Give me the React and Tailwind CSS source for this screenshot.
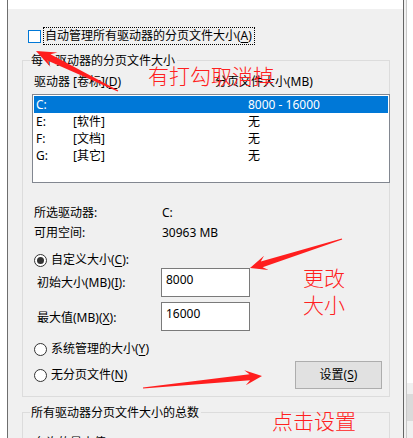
import React from "react";

const FONT = "font-['Noto_Sans','Noto_Sans_CJK_SC',sans-serif]";
const CJK = "font-['Noto_Sans_CJK_SC','Noto_Sans',sans-serif]";

function Radio({ checked }) {
  return (
    <span className="w-[13px] h-[13px] rounded-full border border-[#333333] bg-white flex items-center justify-center shrink-0">
      {checked && <span className="w-[7px] h-[7px] rounded-full bg-[#333333]" />}
    </span>
  );
}

function U({ children }) {
  return <span className="underline underline-offset-2 decoration-1">{children}</span>;
}

function arrowPoints(tx, ty, px, py, hl = 17, hw = 8, sw = 3, tw = 0.6) {
  const dx = px - tx, dy = py - ty;
  const L = Math.hypot(dx, dy);
  const ux = dx / L, uy = dy / L;
  const nx = -uy, ny = ux;
  const p = (a, b) => `${a.toFixed(1)},${b.toFixed(1)}`;
  const bx = px - ux * hl, by = py - uy * hl;
  const kx = px - ux * hl * 0.72, ky = py - uy * hl * 0.72;
  return [
    p(px, py),
    p(bx + nx * hw, by + ny * hw),
    p(kx + nx * sw, ky + ny * sw),
    p(tx + nx * tw, ty + ny * tw),
    p(tx - nx * tw, ty - ny * tw),
    p(kx - nx * sw, ky - ny * sw),
    p(bx - nx * hw, by - ny * hw),
  ].join(" ");
}

function GroupLabel({ children }) {
  return (
    <div className="h-[8px] -mt-[8px] leading-[16px]">
      <span className="inline-block ml-[7px] pl-px pr-[2px] bg-[#f0f0f0] leading-[16px]">{children}</span>
    </div>
  );
}

const rows = [
  { d: "C:", l: "", s: "8000 - 16000", sel: true },
  { d: "E:", l: "[软件]", s: "无" },
  { d: "F:", l: "[文档]", s: "无" },
  { d: "G:", l: "[其它]", s: "无" },
];

export default function App() {
  return (
    <div className={`relative w-[413px] h-[438px] overflow-hidden bg-white flex text-[12px] text-black ${FONT}`}>
      <div className="w-[7px] shrink-0 bg-white" />
      <div className="w-px shrink-0 bg-[#6e6e6e]" />
      <div className="w-[395px] shrink-0 flex flex-col">
        <div className="h-[9px] bg-white shrink-0" />
        <div className="flex-1 bg-[#f0f0f0] flex flex-col">
          {/* checkbox row */}
          <div className="mt-[18px] ml-[20px] flex items-center h-[18px]">
            <span className="w-[13px] h-[13px] border border-[#0078d7] bg-white shrink-0" />
            <span className="ml-[2px] h-[18px] border border-dotted border-black pl-px pr-[2px] leading-[16px]">
              自动管理所有驱动器的分页文件大小(<U>A</U>)
            </span>
          </div>

          {/* group 1 */}
          <div className="mt-[15px] ml-[14px] w-[368px] h-[337px] border border-[#dcdcdc] flex flex-col shrink-0">
            <GroupLabel>每个驱动器的分页文件大小</GroupLabel>
            <div className="mt-[13px] ml-[11px] flex leading-[16px]">
              <span className="w-[181px]">驱动器 [卷标](<U>D</U>)</span>
              <span>分页文件大小(MB)</span>
            </div>
            <div className="mt-[4px] ml-[9px] w-[358px] h-[89px] border border-[#828790] bg-white pt-px px-px flex flex-col">
              {rows.map((r) => (
                <div
                  key={r.d}
                  className={`h-[17px] flex items-center pl-[2px] leading-[16px] ${r.sel ? "bg-[#0078d7] text-white" : ""}`}
                >
                  <span className="w-[37px]">{r.d}</span>
                  <span className="w-[175px]">{r.l}</span>
                  <span>{r.s}</span>
                </div>
              ))}
            </div>

            <div className="mt-[20px] ml-[11px] flex h-[20px] items-center">
              <span className="w-[128px]">所选驱动器:</span>
              <span>C:</span>
            </div>
            <div className="ml-[11px] flex h-[20px] items-center">
              <span className="w-[128px]">可用空间:</span>
              <span>30963 MB</span>
            </div>

            <div className="mt-[9px] ml-[11px] flex h-[16px] items-center gap-[4px]">
              <Radio checked />
              <span>
                自定义大小(<U>C</U>):
              </span>
            </div>
            <div className="ml-[14px] flex items-center">
              <span className="w-[124px]">
                初始大小(MB)(<U>I</U>):
              </span>
              <div className="w-[89px] h-[29px] border border-[#7a7a7a] bg-white pl-[4px] pt-[3px] leading-[16px]">8000</div>
            </div>
            <div className="mt-[5px] ml-[14px] flex items-center">
              <span className="w-[124px] pt-[2px]">
                最大值(MB)(<U>X</U>):
              </span>
              <div className="w-[89px] h-[29px] border border-[#7a7a7a] bg-white pl-[4px] pt-[3px] leading-[16px]">16000</div>
            </div>

            <div className="mt-[10px] ml-[11px] flex h-[16px] items-center gap-[4px]">
              <Radio />
              <span>
                系统管理的大小(<U>Y</U>)
              </span>
            </div>
            <div className="mt-[4px] ml-[11px] mr-[7px] flex h-[28px] items-center">
              <Radio />
              <span className="ml-[4px]">
                无分页文件(<U>N</U>)
              </span>
              <button className="ml-auto w-[87px] h-[28px] bg-[#e1e1e1] border border-[#adadad] flex items-center justify-center text-black">
                设置(<U>S</U>)
              </button>
            </div>
          </div>

          {/* group 2 */}
          <div className="mt-[15px] ml-[14px] w-[368px] h-[60px] border border-[#dcdcdc] flex flex-col shrink-0">
            <GroupLabel>所有驱动器分页文件大小的总数</GroupLabel>
            <div className="mt-[22px] ml-[11px] flex leading-[16px] shrink-0">
              <span className="w-[128px]">允许的最小值:</span>
              <span>16 MB</span>
            </div>
          </div>
        </div>
      </div>
      <div className="w-px shrink-0 bg-[#646464]" />
      <div className="w-[2px] shrink-0 bg-[#f0f0f0]" />
      <div className="w-px shrink-0 bg-[#c8c8c8]" />
      <div className="flex-1 flex flex-col">
        <div className="h-[383px] bg-white" />
        <div className="h-[11px] bg-[#f0f0f0]" />
        <div className="h-[27px] bg-[#dadada]" />
        <div className="flex-1 bg-[#f0f0f0]" />
      </div>

      {/* annotations overlay */}
      <svg className="absolute left-0 top-0 pointer-events-none" width="413" height="438" viewBox="0 0 413 438">
        <polygon points={arrowPoints(118, 91, 36, 51, 20, 8, 3.5, 0.6)} fill="#ff1e1e" />
        <polygon points={arrowPoints(342, 239, 250, 268, 17, 7.5, 3, 0.6)} fill="#ff1e1e" />
        <polygon points={arrowPoints(143, 388, 262, 376, 17, 7.5, 3, 0.6)} fill="#ff1e1e" />
      </svg>
      <div className={`absolute left-[148px] top-[63px] text-[21px] leading-[24px] text-[#ff2020] font-light ${CJK}`}>有打勾取消掉</div>
      <div className={`absolute left-[303px] top-[264px] text-[21px] leading-[27px] text-[#ff2020] font-light ${CJK}`}>
        <div>更改</div>
        <div>大小</div>
      </div>
      <div className={`absolute left-[272px] top-[408px] text-[21px] leading-[24px] text-[#ff2020] font-light ${CJK}`}>点击设置</div>
    </div>
  );
}
